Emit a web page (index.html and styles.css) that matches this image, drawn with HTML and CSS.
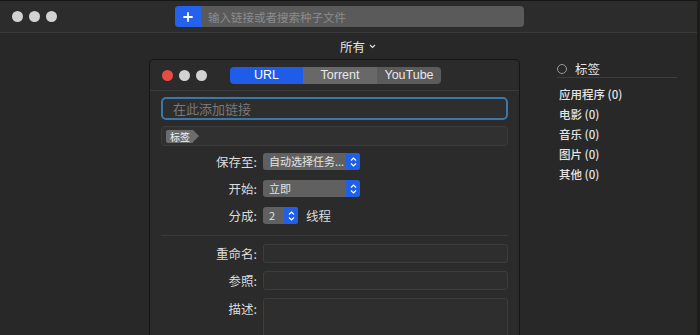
FILE: index.html
```html
<!DOCTYPE html>
<html lang="zh">
<head>
<meta charset="utf-8">
<link rel="stylesheet" href="styles.css">
</head>
<body>
<div class="app">
  <header class="toolbar">
    <div class="lights">
      <span class="dot"></span><span class="dot"></span><span class="dot"></span>
    </div>
    <div class="search">
      <button class="add">
        <svg width="10" height="10" viewBox="0 0 10 10"><path d="M5 1v8M1 5h8" stroke="#fff" stroke-width="1.8" stroke-linecap="round"/></svg>
      </button>
      <span class="search-ph">输入链接或者搜索种子文件</span>
    </div>
  </header>
  <div class="main">
    <div class="center">
      <div class="filter">所有 <svg width="7" height="5" viewBox="0 0 7 5"><path d="M1 1l2.5 2.5L6 1" stroke="#ddd" stroke-width="1.2" fill="none"/></svg></div>
      <section class="sheet">
        <div class="sheet-title">
          <div class="lights small">
            <span class="dot red"></span><span class="dot"></span><span class="dot"></span>
          </div>
          <div class="segmented">
            <span class="seg active">URL</span>
            <span class="seg mid">Torrent</span>
            <span class="seg last">YouTube</span>
          </div>
        </div>
        <div class="sheet-body">
          <div class="url-input">在此添加链接</div>
          <div class="tag-field"><span class="chip">标签</span></div>
          <div class="form">
            <div class="row"><label>保存至:</label><div class="popup wide"><span class="ptext">自动选择任务...</span><span class="arrows"><svg width="7" height="10" viewBox="0 0 7 10"><path d="M1 3.5L3.5 1L6 3.5M1 6.5L3.5 9L6 6.5" stroke="#fff" stroke-width="1.2" fill="none"/></svg></span></div></div>
            <div class="row"><label>开始:</label><div class="popup wide"><span class="ptext">立即</span><span class="arrows"><svg width="7" height="10" viewBox="0 0 7 10"><path d="M1 3.5L3.5 1L6 3.5M1 6.5L3.5 9L6 6.5" stroke="#fff" stroke-width="1.2" fill="none"/></svg></span></div></div>
            <div class="row"><label>分成:</label><div class="popup stepper"><span class="ptext">2</span><span class="arrows"><svg width="7" height="10" viewBox="0 0 7 10"><path d="M1 3.5L3.5 1L6 3.5M1 6.5L3.5 9L6 6.5" stroke="#fff" stroke-width="1.2" fill="none"/></svg></span></div><span class="unit">线程</span></div>
          </div>
          <div class="divider"></div>
          <div class="form lower">
            <div class="row f"><label>重命名:</label><div class="field"></div></div>
            <div class="row f"><label>参照:</label><div class="field"></div></div>
            <div class="row f top"><label>描述:</label><div class="field area"></div></div>
          </div>
        </div>
      </section>
    </div>
    <aside class="sidebar">
      <div class="side-head"><span class="ring"></span>标签</div>
      <ul class="side-list">
        <li>应用程序 (0)</li>
        <li>电影 (0)</li>
        <li>音乐 (0)</li>
        <li>图片 (0)</li>
        <li>其他 (0)</li>
      </ul>
    </aside>
  </div>
</div>
</body>
</html>
```
FILE: styles.css
```css
* { box-sizing: border-box; }
html, body { margin: 0; padding: 0; }
body {
  background: #282828;
  font-family: "Noto Sans CJK SC", "Noto Sans", sans-serif;
  font-size: 12px;
  color: #dcdcdc;
  width: 700px;
  height: 335px;
  overflow: hidden;
}
.app { height: 335px; border-right: 3px solid #1c1c1a; }
.toolbar {
  height: 33px;
  background: #2c2c2c;
  border-top: 1px solid #151515;
  border-bottom: 1px solid #3a3a3a;
  display: flex;
  align-items: center;
  padding-left: 12px;
}
.lights { display: flex; gap: 6px; }
.dot { width: 11px; height: 11px; border-radius: 50%; background: #d2d2d2; display: block; }
.dot.red { background: #ec4b43; }
.search {
  margin-left: 118px;
  width: 349px;
  height: 21px;
  background: #5a5a5a;
  border-radius: 4px;
  display: flex;
  align-items: center;
  overflow: hidden;
}
.add {
  width: 26px; height: 21px;
  border: 0; padding: 0;
  background: #2462ec;
  display: flex; align-items: center; justify-content: center;
}
.search-ph { color: #8c8c8c; margin-left: 7px; font-size: 11.5px; }
.main { display: flex; }
.center { width: 540px; }
.filter {
  height: 26px;
  padding-left: 340px;
  display: flex; align-items: center; gap: 4px;
  font-size: 12.5px;
  color: #e2e2e2;
}
.sheet {
  margin-left: 149px;
  width: 371px;
  height: 277px;
  background: #2b2b2b;
  border: 1px solid #151515;
  border-bottom: 0;
  border-radius: 5px 5px 0 0;
}
.sheet-title {
  height: 31px;
  border-bottom: 1px solid #3c3c3c;
  display: flex; align-items: center;
  padding-left: 12px;
}
.lights.small { gap: 6px; }
.segmented {
  margin-left: 23px;
  display: flex;
  height: 17px;
  border-radius: 4px;
  overflow: hidden;
}
.seg { display: flex; align-items: center; justify-content: center; color: #e8e8e8; font-family: "Liberation Sans", sans-serif; font-size: 12.5px; }
.seg.active { width: 73px; background: #1f5ce8; color: #fff; }
.seg.mid { width: 74px; background: #686868; }
.seg.last { width: 64px; background: #5b5b5b; }
.sheet-body { padding: 6px 11px 0 11px; }
.url-input {
  height: 23px;
  border: 2px solid #3a77ab;
  border-radius: 5px;
  background: #2e2e2e;
  color: #787878;
  font-size: 13px;
  padding-left: 10px;
  display: flex; align-items: center;
}
.tag-field {
  margin-top: 6px;
  height: 20px;
  background: #303030;
  border: 1px solid #3a3a3a;
  border-radius: 3px;
  display: flex; align-items: center;
  padding-left: 4px;
}
.chip {
  position: relative;
  background: #6c6c6c;
  color: #f0f0f0;
  font-size: 10px;
  height: 13px;
  line-height: 13px;
  padding: 0 3px 0 4px;
  border-radius: 2px 0 0 2px;
}
.chip::after {
  content: "";
  position: absolute;
  right: -6px; top: 0;
  border-left: 6px solid #6c6c6c;
  border-top: 6.5px solid transparent;
  border-bottom: 6.5px solid transparent;
}
.form { display: flex; flex-direction: column; gap: 10px; margin-top: 7px; }
.row { display: flex; align-items: center; height: 17px; }
.row label { width: 102px; flex: none; text-align: right; padding-right: 6px; color: #dcdcdc; font-size: 12.5px; }
.popup {
  height: 17px;
  background: #606060;
  border-radius: 3px;
  display: flex; align-items: center; justify-content: space-between;
  overflow: hidden;
  color: #e4e4e4;
  font-size: 11px;
  padding-left: 6px;
  white-space: nowrap;
}
.ptext { flex: 1; overflow: hidden; line-height: 17px; }
.popup.wide { width: 97px; }
.popup.stepper { width: 35px; }
.arrows {
  flex: none;
  width: 14px; height: 17px;
  background: #2060e6;
  display: flex; align-items: center; justify-content: center;
}
.unit { margin-left: 8px; font-size: 12.5px; }
.divider { height: 1px; background: #3a3a3a; margin-top: 11px; }
.form.lower { gap: 8px; margin-top: 8px; }
.row.f { height: 19px; }
.row.top { align-items: flex-start; height: 40px; }
.row.top label { margin-top: 1px; }
.field {
  width: 246px;
  height: 19px;
  background: #2e2e2e;
  border: 1px solid #3d3d3d;
  border-radius: 3px;
}
.field.area { height: 40px; border-radius: 3px 3px 0 0; }
.sidebar { padding-left: 17px; padding-top: 27px; width: 137px; }
.side-head {
  display: flex; align-items: center; gap: 8px;
  height: 18px;
  font-size: 12.5px;
  color: #e6e6e6;
  border-bottom: 1px solid #3e3e3e;
}
.ring { width: 10px; height: 10px; border: 1.3px solid #9a9a9a; border-radius: 50%; display: block; }
.side-list { list-style: none; margin: 6px 0 0 2px; padding: 0; }
.side-list li { height: 20px; line-height: 20px; font-size: 11.5px; font-weight: 500; color: #e4e4e4; }
```
